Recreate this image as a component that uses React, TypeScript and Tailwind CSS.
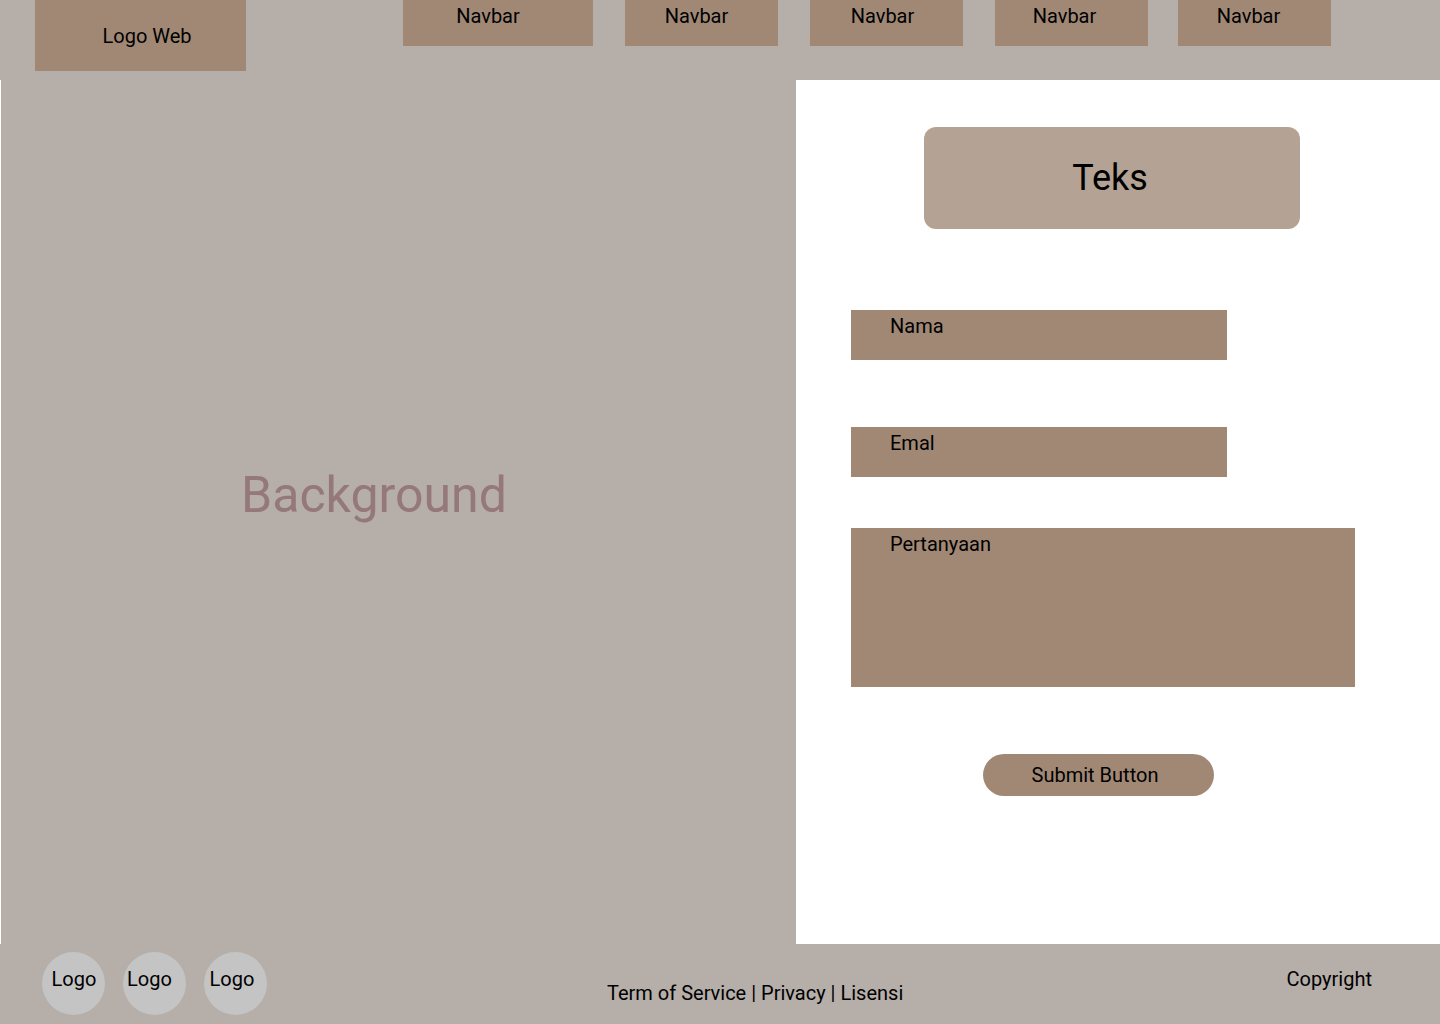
const navItems = [
  { label: 'Navbar', box: 'w-[190px] ml-[157px] pr-[20px]' },
  { label: 'Navbar', box: 'w-[153px] ml-[32px] pr-[10px]' },
  { label: 'Navbar', box: 'w-[153px] ml-[32px] pr-[8px]' },
  { label: 'Navbar', box: 'w-[153px] ml-[32px] pr-[14px]' },
  { label: 'Navbar', box: 'w-[153px] ml-[30px] pr-[12px]' },
]

const footerLogos = ['pl-px', 'pr-[10px]', 'pr-[7px]']

export default function App() {
  return (
    <div className="w-[1440px] h-[1024px] flex flex-col bg-[#b6aea8] text-black font-['Roboto',sans-serif] overflow-hidden">
      {/* Header */}
      <header className="h-[80px] flex items-start shrink-0">
        <div className="ml-[35px] w-[211px] h-[71px] bg-[#a18875] flex items-center justify-center pl-[13px] text-[20px]">
          Logo Web
        </div>
        {navItems.map((item, i) => (
          <div
            key={i}
            className={`${item.box} h-[46px] bg-[#a18875] flex justify-center pt-[4px] text-[20px] leading-[24px]`}
          >
            {item.label}
          </div>
        ))}
      </header>

      {/* Main */}
      <main className="h-[864px] flex shrink-0">
        <div className="w-[796px] border-l border-white flex items-center justify-center pr-[49px] pb-[34px]">
          <span className="text-[50px] text-[#957878] leading-none">Background</span>
        </div>

        <div className="flex-1 bg-white flex flex-col items-start">
          <div className="ml-[128px] mt-[47px] w-[376px] h-[102px] rounded-[12px] bg-[#b4a394] flex items-center justify-center pr-[4px] text-[36px]">
            Teks
          </div>

          <div className="ml-[55px] mt-[81px] w-[376px] h-[50px] bg-[#a18875] pl-[39px] pt-[4px] text-[20px] leading-[24px]">
            Nama
          </div>

          <div className="ml-[55px] mt-[67px] w-[376px] h-[50px] bg-[#a18875] pl-[39px] pt-[4px] text-[20px] leading-[24px]">
            Emal
          </div>

          <div className="ml-[55px] mt-[51px] w-[504px] h-[159px] bg-[#a18875] pl-[39px] pt-[4px] text-[20px] leading-[24px]">
            Pertanyaan
          </div>

          <button
            type="button"
            className="ml-[187px] mt-[67px] w-[231px] h-[42px] rounded-full bg-[#a18875] flex items-center justify-center pr-[7px] text-[20px]"
          >
            Submit Button
          </button>
        </div>
      </main>

      {/* Footer */}
      <footer className="h-[80px] flex items-start shrink-0">
        <div className="ml-[42px] mt-[8px] flex gap-[18px]">
          {footerLogos.map((cls, i) => (
            <div
              key={i}
              className={`w-[63px] h-[63px] rounded-full bg-[#c4c4c4] flex items-center justify-center pb-[9px] text-[20px] ${cls}`}
            >
              Logo
            </div>
          ))}
        </div>
        <p className="ml-[340px] mt-[37px] text-[20px] leading-[24px]">Term of Service | Privacy | Lisensi</p>
        <p className="ml-auto mr-[68px] mt-[23px] text-[20px] leading-[24px]">Copyright</p>
      </footer>
    </div>
  )
}
